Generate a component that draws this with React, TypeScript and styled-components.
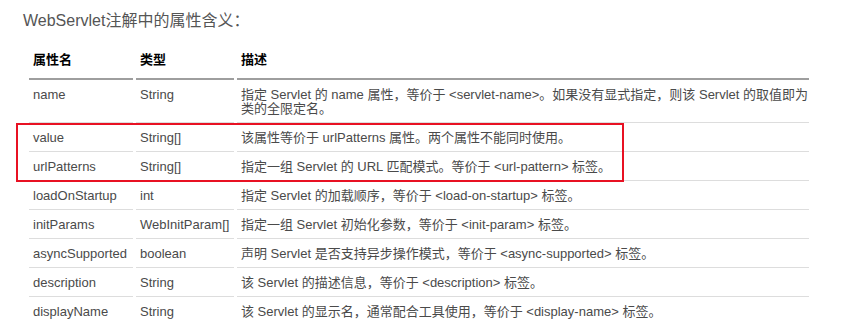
import React from "react";
import styled, { createGlobalStyle } from "styled-components";

const GlobalStyle = createGlobalStyle`
  html, body { margin: 0; padding: 0; background: #fff; }
  body { font-family: "Liberation Sans", Arial, "Noto Sans CJK SC", sans-serif; }
`;

const Page = styled.div`
  position: relative;
  width: 842px;
  height: 336px;
  overflow: hidden;
  background: #fff;
`;

const Title = styled.h3`
  margin: 0;
  padding: 11px 0 0 23px;
  font-size: 16px;
  line-height: 20px;
  font-weight: normal;
  color: #555;
`;

const Table = styled.table`
  margin: 13px 0 0 26px;
  width: 786px;
  table-layout: fixed;
  border-collapse: separate;
  border-spacing: 3px 0;
  font-size: 13px;
  line-height: 14px;
`;

const Th = styled.th<{ $w: number }>`
  width: ${(p) => p.$w - 8}px;
  padding: 9px 4px 11px;
  text-align: left;
  font-weight: bold;
  color: #000;
  border-bottom: 2px solid #9e9e9e;
`;

const Row = styled.tr`
  &:last-child td { border-bottom: none; }
`;

const Td = styled.td`
  padding: 8px 4px 6px;
  vertical-align: top;
  color: #4a4a4a;
  border-bottom: 1px solid #ddd;
  white-space: nowrap;
  overflow: visible;
`;

const Highlight = styled.div`
  position: absolute;
  left: 16px;
  top: 123px;
  width: 608px;
  height: 59px;
  box-sizing: border-box;
  border: 2px solid #e81123;
  pointer-events: none;
`;

const rows: [string, string, React.ReactNode][] = [
  [
    "name",
    "String",
    <>
      指定 Servlet 的 name 属性，等价于 &lt;servlet-name&gt;。如果没有显式指定，则该 Servlet 的取值即为
      <br />
      类的全限定名。
    </>,
  ],
  ["value", "String[]", "该属性等价于 urlPatterns 属性。两个属性不能同时使用。"],
  ["urlPatterns", "String[]", "指定一组 Servlet 的 URL 匹配模式。等价于 <url-pattern> 标签。"],
  ["loadOnStartup", "int", "指定 Servlet 的加载顺序，等价于 <load-on-startup> 标签。"],
  ["initParams", "WebInitParam[]", "指定一组 Servlet 初始化参数，等价于 <init-param> 标签。"],
  ["asyncSupported", "boolean", "声明 Servlet 是否支持异步操作模式，等价于 <async-supported> 标签。"],
  ["description", "String", "该 Servlet 的描述信息，等价于 <description> 标签。"],
  ["displayName", "String", "该 Servlet 的显示名，通常配合工具使用，等价于 <display-name> 标签。"],
];

export default function App() {
  return (
    <Page>
      <GlobalStyle />
      <Title>WebServlet注解中的属性含义：</Title>
      <Table>
        <thead>
          <tr>
            <Th $w={104}>属性名</Th>
            <Th $w={98}>类型</Th>
            <Th $w={572}>描述</Th>
          </tr>
        </thead>
        <tbody>
          {rows.map(([name, type, desc]) => (
            <Row key={name}>
              <Td>{name}</Td>
              <Td>{type}</Td>
              <Td>{desc}</Td>
            </Row>
          ))}
        </tbody>
      </Table>
      <Highlight />
    </Page>
  );
}
